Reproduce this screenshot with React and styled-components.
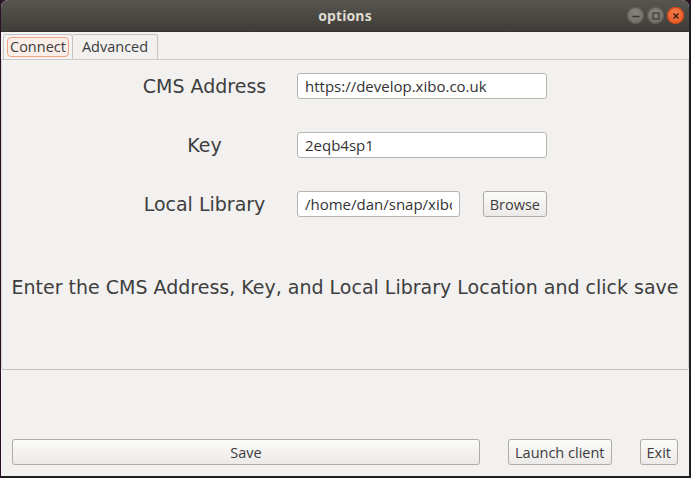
import React, { useState } from "react";
import styled, { createGlobalStyle } from "styled-components";

const GlobalStyle = createGlobalStyle`
  html, body {
    margin: 0;
    padding: 0;
    background: #2c1226;
  }
  body {
    font-family: "Open Sans", "Noto Sans", sans-serif;
    width: 691px;
    height: 478px;
    overflow: hidden;
  }
`;

function App() {
  const [tab, setTab] = useState("connect");
  const [cms, setCms] = useState("https://develop.xibo.co.uk");
  const [key, setKey] = useState("2eqb4sp1");
  const [library, setLibrary] = useState("/home/dan/snap/xibo-player/common");

  return (
    <>
      <GlobalStyle />
      <Windowframe>
        <Titlebar>
          <Titletext>options</Titletext>
          <Controls>
            <Winbutton>
              <svg width="10" height="10" viewBox="0 0 10 10">
                <path d="M1.5 5.5h7" stroke="#3a3935" strokeWidth="1.4" />
              </svg>
            </Winbutton>
            <Winbutton>
              <svg width="10" height="10" viewBox="0 0 10 10">
                <rect x="2" y="2" width="6" height="6" fill="none" stroke="#3a3935" strokeWidth="1.2" />
              </svg>
            </Winbutton>
            <Winbutton close>
              <svg width="10" height="10" viewBox="0 0 10 10">
                <path d="M2.5 2.5l5 5M7.5 2.5l-5 5" stroke="#3a1a0e" strokeWidth="1.4" />
              </svg>
            </Winbutton>
          </Controls>
        </Titlebar>

        <Content>
          <Tabbar>
            <Tab active={tab === "connect"} onClick={() => setTab("connect")}>
              <Tablabel focused={tab === "connect"}>Connect</Tablabel>
            </Tab>
            <Tab active={tab === "advanced"} onClick={() => setTab("advanced")}>
              <Tablabel focused={tab === "advanced"}>Advanced</Tablabel>
            </Tab>
          </Tabbar>

          <Tabpane>
            <Formgrid>
              <Label>CMS Address</Label>
              <Field value={cms} onChange={(e) => setCms(e.target.value)} />
              <Label>Key</Label>
              <Field value={key} onChange={(e) => setKey(e.target.value)} />
              <Label>Local Library</Label>
              <Libraryrow>
                <Field value={library} onChange={(e) => setLibrary(e.target.value)} />
                <Button>Browse</Button>
              </Libraryrow>
            </Formgrid>
            <Hint>Enter the CMS Address, Key, and Local Library Location and click save</Hint>
          </Tabpane>

          <Footer>
            <Button grow>Save</Button>
            <Button>Launch client</Button>
            <Button>Exit</Button>
          </Footer>
        </Content>
      </Windowframe>
    </>
  );
}

export default App;

const Windowframe = styled.div`
  margin-left: 1px;
  width: 688px;
  height: 476px;
  display: flex;
  flex-direction: column;
  background: #f2f1f0;
  border-radius: 7px 7px 0 0;
  overflow: hidden;
  box-shadow: 1px 1px 0 #232323, 2px 2px 0 #1d1d1d;
`;

const Titlebar = styled.div`
  height: 32px;
  flex-shrink: 0;
  display: flex;
  align-items: center;
  justify-content: center;
  position: relative;
  background: linear-gradient(#57554e, #3e3d39);
  border-bottom: 1px solid #34332f;
  box-sizing: border-box;
`;

const Titletext = styled.div`
  color: #dfdbd2;
  font-family: "Open Sans", sans-serif;
  font-weight: 700;
  font-size: 14px;
  letter-spacing: 0.1px;
`;

const Controls = styled.div`
  position: absolute;
  right: 5px;
  top: 7px;
  display: flex;
  gap: 3px;
`;

const Winbutton = styled.div`
  width: 17px;
  height: 17px;
  border-radius: 50%;
  display: flex;
  align-items: center;
  justify-content: center;
  background: ${(p) =>
    p.close
      ? "radial-gradient(circle at 50% 35%, #f47a4a, #e3521e)"
      : "radial-gradient(circle at 50% 35%, #85837c, #6b6963)"};
  box-shadow: inset 0 0 0 1px ${(p) => (p.close ? "#c8461a" : "#5a5853")};
`;

const Content = styled.div`
  flex: 1;
  display: flex;
  flex-direction: column;
`;

const Tabbar = styled.div`
  display: flex;
  padding: 2px 0 0 2px;
  height: 25px;
`;

const Tab = styled.div`
  display: flex;
  align-items: center;
  padding: 0 3px;
  border: 1px solid #c7c4bf;
  border-bottom: none;
  border-left: ${(p) => (p.active ? "1px solid #c7c4bf" : "none")};
  border-radius: ${(p) => (p.active ? "3px 3px 0 0" : "0 3px 0 0")};
  background: ${(p) => (p.active ? "#f4f3f2" : "#f2f1f0")};
  cursor: pointer;
`;

const Tablabel = styled.span`
  font-family: "Open Sans", sans-serif;
  font-size: 14.5px;
  color: #3c3c3c;
  padding: 0 ${(p) => (p.focused ? "2px" : "5px")};
  line-height: 18px;
  border-radius: 4px;
  border: 1px solid ${(p) => (p.focused ? "#f0a283" : "transparent")};
  background: ${(p) => (p.focused ? "#fbeee9" : "transparent")};
`;

const Tabpane = styled.div`
  height: 309px;
  border-top: 1px solid #cdcac5;
  border-bottom: 1px solid #c3c0bb;
  border-left: 1px solid #d6d3ce;
  border-right: 1px solid #d6d3ce;
  border-radius: 0 0 3px 3px;
  display: flex;
  flex-direction: column;
  align-items: center;
`;

const Formgrid = styled.div`
  align-self: flex-start;
  display: grid;
  grid-template-columns: 185px 250px;
  row-gap: 33px;
  align-items: center;
  margin-top: 13px;
  margin-left: 110px;
`;

const Label = styled.div`
  font-family: "DejaVu Sans", sans-serif;
  font-size: 19px;
  color: #3e3e3e;
  text-align: center;
`;

const Field = styled.input`
  box-sizing: border-box;
  width: 100%;
  min-width: 0;
  height: 26px;
  padding: 0 7px;
  border: 1px solid #b8b5b0;
  border-radius: 3px;
  background: #ffffff;
  font-family: "Open Sans", sans-serif;
  font-size: 15px;
  color: #333333;
  outline: none;
`;

const Libraryrow = styled.div`
  display: flex;
  gap: 23px;

  ${Field} {
    width: 164px;
  }
`;

const Button = styled.button`
  box-sizing: border-box;
  height: 26px;
  padding: 0 6px;
  flex: ${(p) => (p.grow ? "1" : "none")};
  border: 1px solid #aeaba6;
  border-radius: 3px;
  background: linear-gradient(#fbfbfa, #eceae8);
  font-family: "Open Sans", sans-serif;
  font-size: 14.5px;
  color: #3c3c3c;
  cursor: pointer;
`;

const Hint = styled.div`
  margin-top: 59px;
  font-family: "DejaVu Sans", sans-serif;
  font-size: 19px;
  color: #3e3e3e;
  white-space: nowrap;
`;

const Footer = styled.div`
  margin-top: auto;
  display: flex;
  gap: 28px;
  padding: 0 11px 11px 11px;
`;
